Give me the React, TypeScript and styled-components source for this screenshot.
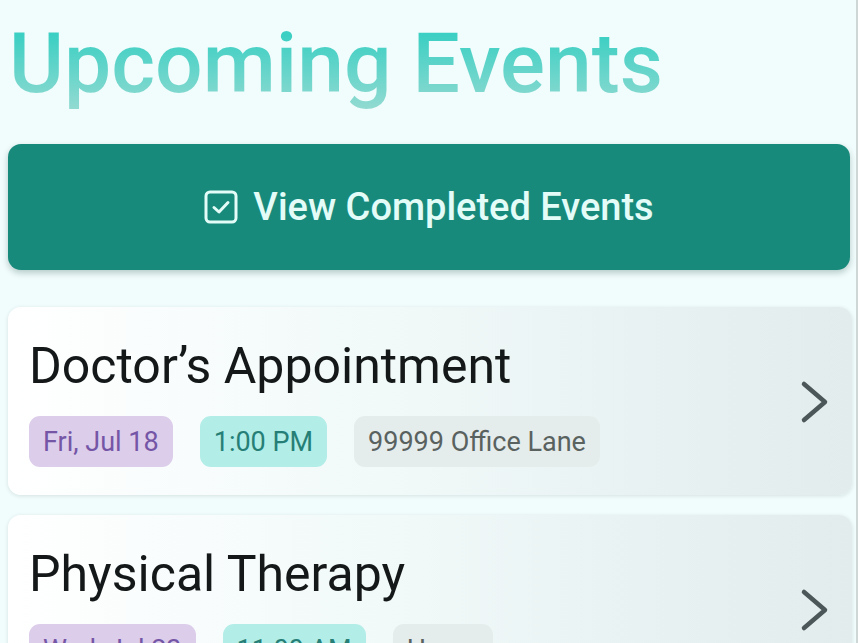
import { FC } from "react";
import styled, { createGlobalStyle } from "styled-components";

const GlobalStyle = createGlobalStyle`
  html, body {
    margin: 0;
    padding: 0;
    background: #f1fcfc;
    font-family: Roboto, "Noto Sans", sans-serif;
    overflow: hidden;
  }
`;

const Page = styled.div`
  width: 858px;
  height: 643px;
  box-sizing: border-box;
  padding: 0 8px;
  display: flex;
  flex-direction: column;
  overflow: hidden;
  border-right: 2px solid #cfd6d6;

  & > * {
    flex-shrink: 0;
  }
`;

const Title = styled.h1`
  margin: 15px 0 0 0;
  padding: 0 0 0 1px;
  font-size: 84px;
  font-weight: 500;
  line-height: 98px;
  background: linear-gradient(180deg, #3ccfc3 20%, #96dbd2 100%);
  -webkit-background-clip: text;
  background-clip: text;
  color: transparent;
  align-self: flex-start;
`;

const CompletedButton = styled.button`
  margin-top: 31px;
  height: 126px;
  width: 842px;
  border: none;
  border-radius: 13px;
  background: #188a7c;
  box-shadow: 0 3px 6px rgba(0, 60, 50, 0.25);
  display: flex;
  align-items: center;
  justify-content: center;
  gap: 15px;
  color: #e3fcf7;
  font-family: Roboto, sans-serif;
  font-size: 38px;
  font-weight: 500;
  padding: 0;
`;

const List = styled.div`
  margin-top: 37px;
  display: flex;
  flex-direction: column;
  gap: 20px;
`;

const Card = styled.div`
  width: 844px;
  box-sizing: border-box;
  border-radius: 13px;
  background: linear-gradient(90deg, #ffffff 0%, #f1f9f9 45%, #e2ecec 100%);
  box-shadow: 0 1px 4px rgba(0, 40, 40, 0.12);
  padding: 30px 22px 28px 21px;
  display: flex;
  align-items: center;
  justify-content: space-between;
`;

const CardBody = styled.div`
  display: flex;
  flex-direction: column;
`;

const CardTitle = styled.div`
  font-size: 50px;
  line-height: 58px;
  color: #141818;
  font-weight: 400;
`;

const Chips = styled.div`
  margin-top: 21px;
  display: flex;
  gap: 27px;
`;

const chipColors = {
  date: { bg: "#dccdeb", fg: "#7556a6" },
  time: { bg: "#b2ede8", fg: "#267f76" },
  place: { bg: "#e5ecec", fg: "#59625f" },
};

const Chip = styled.span<{ $kind: keyof typeof chipColors }>`
  height: 51px;
  padding: 0 14px;
  border-radius: 11px;
  display: flex;
  align-items: center;
  font-size: 27px;
  background: ${(p) => chipColors[p.$kind].bg};
  color: ${(p) => chipColors[p.$kind].fg};
`;

const Chevron = styled.svg`
  width: 30px;
  height: 44px;
  margin-right: 0;
  flex-shrink: 0;
`;

const CheckIcon: FC = () => (
  <svg width="34" height="34" viewBox="0 0 34 34" fill="none">
    <rect x="2" y="2" width="30" height="30" rx="4" stroke="#e3fcf7" strokeWidth="3" />
    <path d="M10 17.5 L15 22 L24 12.5" stroke="#e3fcf7" strokeWidth="3" strokeLinecap="round" strokeLinejoin="round" />
  </svg>
);

type Event = { title: string; date: string; time: string; place: string };

const events: Event[] = [
  { title: "Doctor’s Appointment", date: "Fri, Jul 18", time: "1:00 PM", place: "99999 Office Lane" },
  { title: "Physical Therapy", date: "Wed, Jul 23", time: "11:00 AM", place: "Home" },
];

const EventCard: FC<{ event: Event }> = ({ event }) => (
  <Card>
    <CardBody>
      <CardTitle>{event.title}</CardTitle>
      <Chips>
        <Chip $kind="date">{event.date}</Chip>
        <Chip $kind="time">{event.time}</Chip>
        <Chip $kind="place">{event.place}</Chip>
      </Chips>
    </CardBody>
    <Chevron viewBox="0 0 30 44" fill="none">
      <path d="M4 4 L25 22 L4 40" stroke="#4c5759" strokeWidth="4.5" strokeLinecap="round" strokeLinejoin="round" />
    </Chevron>
  </Card>
);

export default function App() {
  return (
    <>
      <GlobalStyle />
      <Page>
        <Title>Upcoming Events</Title>
        <CompletedButton>
          <CheckIcon />
          View Completed Events
        </CompletedButton>
        <List>
          {events.map((e) => (
            <EventCard key={e.title} event={e} />
          ))}
        </List>
      </Page>
    </>
  );
}
